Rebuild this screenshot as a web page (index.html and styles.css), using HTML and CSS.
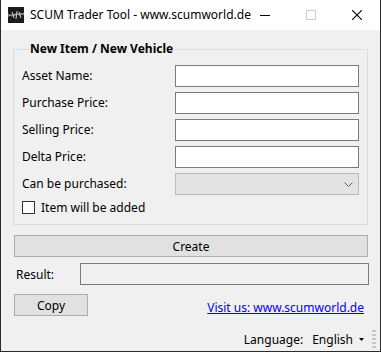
FILE: index.html
```html
<!DOCTYPE html>
<html>
<head>
    <title>SCUM Trader Tool</title>
    <link rel="stylesheet" href="styles.css">
</head>
<body>
    <div class="window">
        <div class="titlebar">
            <svg class="app-icon" width="16" height="16" viewBox="0 0 16 16">
                <rect width="16" height="16" fill="#1c1c1c"/>
                <path d="M0 9 L4 8 L8 7 L12 8 L16 6" stroke="#b8b8b8" stroke-width="1" fill="none"/>
                <path d="M0 7 L4 9 L8 8 L12 6 L16 8" stroke="#8a8a8a" stroke-width="1" fill="none"/>
                <path d="M4 5 L6 11 M9 4 L8 12 M11 5 L13 11" stroke="#d0d0d0" stroke-width="1" fill="none"/>
            </svg>
            <span class="title">SCUM Trader Tool - www.scumworld.de</span>
            <div class="caption-buttons">
                <span class="caption-btn">
                    <svg width="10" height="10" viewBox="0 0 10 10"><path d="M0 5.5 H10" stroke="#000" stroke-width="1"/></svg>
                </span>
                <span class="caption-btn">
                    <svg width="10" height="10" viewBox="0 0 10 10"><rect x="0.5" y="0.5" width="9" height="9" stroke="#cccccc" fill="none"/></svg>
                </span>
                <span class="caption-btn">
                    <svg width="10" height="10" viewBox="0 0 10 10"><path d="M0 0 L10 10 M10 0 L0 10" stroke="#000" stroke-width="1.1"/></svg>
                </span>
            </div>
        </div>

        <div class="client">
            <fieldset class="group">
                <legend>New Item / New Vehicle</legend>
                <div class="form-grid">
                    <label>Asset Name:</label>
                    <input class="text-box" type="text">
                    <label>Purchase Price:</label>
                    <input class="text-box" type="text">
                    <label>Selling Price:</label>
                    <input class="text-box" type="text">
                    <label>Delta Price:</label>
                    <input class="text-box" type="text">
                    <label>Can be purchased:</label>
                    <div class="combo">
                        <svg width="9" height="5" viewBox="0 0 9 5"><path d="M0.5 0.5 L4.5 4.5 L8.5 0.5" stroke="#606060" fill="none"/></svg>
                    </div>
                </div>
                <div class="check-row">
                    <span class="check-box"></span>
                    <span>Item will be added</span>
                </div>
            </fieldset>

            <button class="btn create-btn" type="button">Create</button>

            <div class="result-row">
                <span class="result-label">Result:</span>
                <div class="result-box"></div>
            </div>

            <div class="action-row">
                <button class="btn copy-btn" type="button">Copy</button>
                <a class="site-link" href="#">Visit us: www.scumworld.de</a>
            </div>

            <div class="status-bar">
                <span class="lang-label">Language:</span>
                <span class="lang-value">English</span>
                <svg class="lang-arrow" width="5" height="3" viewBox="0 0 5 3"><path d="M0 0 H5 L2.5 3 Z" fill="#000"/></svg>
                <svg class="grip" width="4" height="22" viewBox="0 0 4 22">
                    <rect x="0" y="1" width="2" height="2" fill="#c8c8c8"/>
                    <rect x="2" y="1" width="2" height="2" fill="#c8c8c8"/>
                    <rect x="0" y="5" width="2" height="2" fill="#c8c8c8"/>
                    <rect x="2" y="5" width="2" height="2" fill="#c8c8c8"/>
                    <rect x="0" y="9" width="2" height="2" fill="#c8c8c8"/>
                    <rect x="2" y="9" width="2" height="2" fill="#c8c8c8"/>
                    <rect x="0" y="13" width="2" height="2" fill="#c8c8c8"/>
                    <rect x="2" y="13" width="2" height="2" fill="#c8c8c8"/>
                    <rect x="0" y="17" width="2" height="2" fill="#c8c8c8"/>
                    <rect x="2" y="17" width="2" height="2" fill="#c8c8c8"/>
                </svg>
            </div>
        </div>
    </div>
</body>
</html>
```

FILE: styles.css
```css
body {
    margin: 0;
    padding: 0;
    background-color: #ffffff;
    font-family: "Noto Sans", "Open Sans", sans-serif;
    font-size: 12px;
    color: #000;
}

.window {
    width: 381px;
    height: 352px;
    box-sizing: border-box;
    border: 1px solid #2b2b2b;
    border-top: none;
    display: flex;
    flex-direction: column;
}

.titlebar {
    height: 30px;
    background-color: #ffffff;
    display: flex;
    align-items: center;
}

.app-icon {
    flex: none;
    margin-left: 7px;
    margin-right: 6px;
}

.title {
    flex: 1;
    min-width: 0;
    white-space: nowrap;
    line-height: 16px;
}

.caption-buttons {
    flex: none;
    display: flex;
    height: 30px;
}

.caption-btn {
    width: 46px;
    height: 30px;
    display: flex;
    align-items: center;
    justify-content: center;
}

.client {
    flex: 1;
    background-color: #f0f0f0;
    padding: 0 12px;
    display: flex;
    flex-direction: column;
}

.group {
    margin: 11px 0 0 0;
    padding: 8px 8px 10px 8px;
    border: 1px solid #dcdcdc;
    min-width: 0;
}

.group legend {
    font-weight: bold;
    line-height: 16px;
    padding: 0 1px;
    margin-left: 7px;
}

.form-grid {
    display: grid;
    grid-template-columns: 1fr 184px;
    grid-auto-rows: 22px;
    row-gap: 5px;
    align-items: center;
}

.form-grid label {
    line-height: 16px;
}

.text-box {
    box-sizing: border-box;
    width: 184px;
    height: 22px;
    margin: 0;
    border: 1px solid #7a7a7a;
    background-color: #fff;
    padding: 0 3px;
    outline: none;
}

.combo {
    box-sizing: border-box;
    width: 184px;
    height: 22px;
    border: 1px solid #bcbcbc;
    background-color: #e3e3e3;
    display: flex;
    align-items: center;
    justify-content: flex-end;
    padding-right: 5px;
}

.check-row {
    margin-top: 6px;
    height: 13px;
    display: flex;
    align-items: center;
    line-height: 13px;
}

.check-box {
    box-sizing: border-box;
    width: 13px;
    height: 13px;
    border: 1px solid #333;
    background-color: #fff;
    margin-right: 6px;
}

.btn {
    font-family: inherit;
    font-size: 12px;
    color: #000;
    background-color: #e1e1e1;
    border: 1px solid #adadad;
    height: 22px;
    padding: 0;
    margin: 0;
}

.create-btn {
    margin: 10px 0 0 1px;
}

.result-row {
    margin-top: 6px;
    display: flex;
    align-items: center;
    height: 22px;
}

.result-label {
    flex: none;
    box-sizing: border-box;
    width: 67px;
    padding-left: 3px;
}

.result-box {
    box-sizing: border-box;
    flex: 1;
    height: 22px;
    border: 1px solid #7a7a7a;
    margin-right: -1px;
}

.action-row {
    margin-top: 9px;
    display: flex;
    justify-content: space-between;
    height: 22px;
}

.copy-btn {
    width: 74px;
    margin-left: 1px;
}

.site-link {
    align-self: flex-end;
    color: #0000ff;
    line-height: 16px;
    margin-right: 4px;
}

.status-bar {
    margin-top: auto;
    height: 24px;
    display: flex;
    align-items: center;
    justify-content: flex-end;
    margin-right: -10px;
}

.lang-value {
    margin-left: 9px;
}

.lang-arrow {
    margin-left: 6px;
    margin-right: 8px;
}

.grip {
    align-self: flex-end;
    margin-right: 2px;
}
```
